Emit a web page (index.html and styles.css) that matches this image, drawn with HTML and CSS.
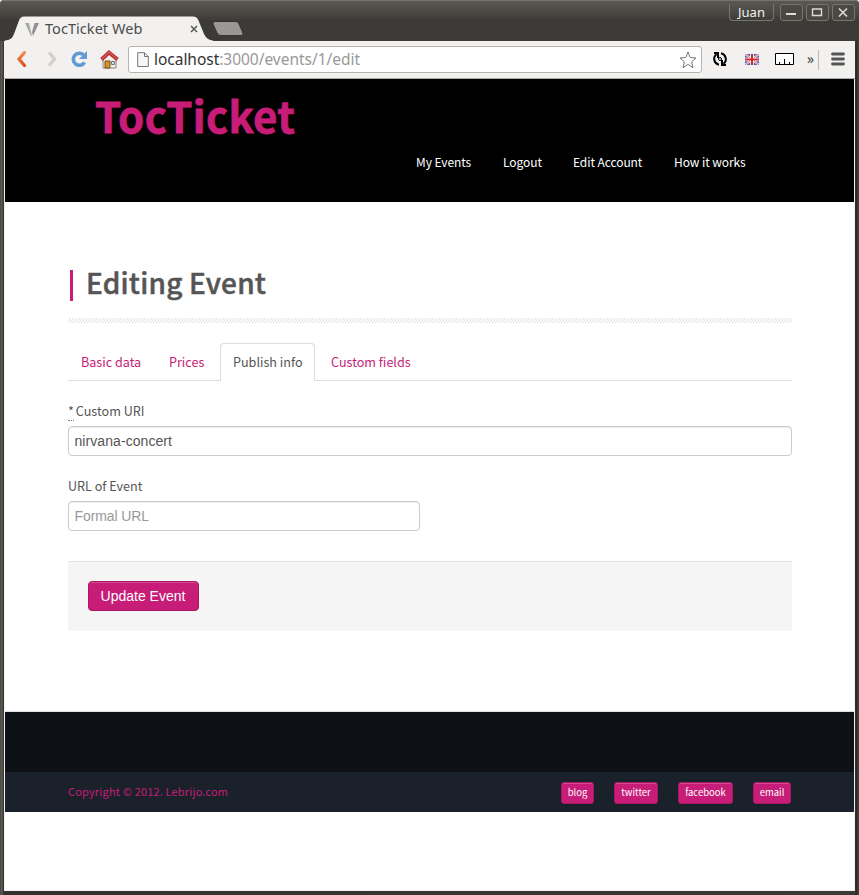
FILE: index.html
```html
<!DOCTYPE html>
<html lang="en">
<head>
<meta charset="utf-8">
<title>TocTicket Web</title>
<link rel="stylesheet" href="styles.css">
</head>
<body>
<div class="window">
  <div class="titlebar">
    <div class="tab-strip">
      <div class="browser-tab">
        <svg class="tab-shape" width="210" height="25" viewBox="0 0 210 25"><path d="M0 25V24.500Q7 24 9 18L14 4.500Q15.500 .5 19 .5H188Q192 .5 193.500 4.500L199 18Q202 24 208 24.500V25Z" fill="#f2f1f0"/></svg>
        <svg class="favicon" width="15" height="15" viewBox="0 0 15 15"><path d="M0 1H4L7 14H6Z" fill="#aaa"/><path d="M14 1L8 14L7 10L9.500 1Z" fill="#919191"/></svg>
        <span class="tab-title">TocTicket Web</span>
        <svg class="tab-close" width="8" height="8" viewBox="0 0 8 8"><path d="M1 1L7 7M7 1L1 7" stroke="#5a5a5a" stroke-width="1.600"/></svg>
      </div>
      <svg class="new-tab" width="32" height="16" viewBox="0 0 32 16"><path d="M3 .5H24Q26 .5 27 3L31 12Q31.500 14.500 29 14.500H9Q6 14.500 5 12L1 3Q.5 .5 3 .5Z" fill="#999894" stroke="#34332f"/></svg>
    </div>
    <div class="window-controls">
      <span class="user">Juan</span>
      <span class="control"><svg width="21" height="15" viewBox="0 0 21 15"><path d="M5 9H15" stroke="#dfdbd2" stroke-width="2"/></svg></span>
      <span class="control"><svg width="21" height="15" viewBox="0 0 21 15"><path d="M5.500 4H14.500V10.500H5.500Z" fill="none" stroke="#dfdbd2" stroke-width="1.400"/></svg></span>
      <span class="control"><svg width="21" height="15" viewBox="0 0 21 15"><path d="M6 3.500L14 11.500M14 3.500L6 11.500" stroke="#dfdbd2" stroke-width="1.600"/></svg></span>
    </div>
  </div>
  <div class="toolbar">
    <svg class="back" width="12" height="18" viewBox="0 0 12 18"><defs><linearGradient id="orange" x2="0" y2="1"><stop stop-color="#f58b55"/><stop offset="1" stop-color="#df4d14"/></linearGradient></defs><path d="M8.500 2.500L3 9L8.500 15.500" fill="none" stroke="url(#orange)" stroke-width="3.200" stroke-linecap="round"/></svg>
    <svg class="forward" width="12" height="18" viewBox="0 0 12 18"><path d="M2 2.500L7.500 9L2 15.500" fill="none" stroke="#d2d0ce" stroke-width="3.400"/></svg>
    <svg class="reload" width="17" height="18" viewBox="0 0 17 18"><path d="M13.500 12.300A6 6 0 1 1 12.500 5" fill="none" stroke="#629bd3" stroke-width="3.600"/><path d="M16 1V9H8Z" fill="#629bd3"/></svg>
    <svg class="home" width="19" height="19" viewBox="0 0 19 19"><path d="M3 9L9 3L16 9V18H3Z" fill="#f4efe5" stroke="#8b8578"/><path d="M5 11H10V18H5Z" fill="#d49426" stroke="#765119"/><path d="M11.500 11.500H14.500V14.500H11.500Z" fill="#d7e2e9" stroke="#777"/><path d="M1.500 9.500L9 2.500L17.500 9.500" fill="none" stroke="#ba3536" stroke-width="3.800"/><path d="M2 9L9.200 2L17 9" fill="none" stroke="#de6b68"/></svg>
    <div class="address">
      <svg width="12" height="16" viewBox="0 0 12 16"><path d="M.7.700H7.500L11.300 4.500V14.500H.7Z M7.500.700V4.500H11.300" fill="#f7f7f7" stroke="#777"/></svg>
      <span class="url"><b>localhost</b>:3000/events/1/edit</span>
      <svg class="star" width="18" height="18" viewBox="0 0 18 18"><path d="M9 1L11.200 6.500L17 7L12.600 10.800L14 16.700L9 13.500L4 16.700L5.400 10.800L1 7L6.800 6.500Z" fill="#fff" stroke="#777" stroke-linejoin="round"/></svg>
    </div>
    <svg class="sync" width="16" height="16" viewBox="0 0 16 16"><g fill="none" stroke="#000" stroke-width="2"><path d="M7 13.800A6 6 0 0 1 4.500 3.200M9 2.200A6 6 0 0 1 11.500 12.800"/><path d="M2 2H6V7M14 14H10V9"/></g><circle cx="8" cy="8" r="1.500" fill="none" stroke="#000"/></svg>
    <svg class="flag" width="14" height="11" viewBox="0 0 14 11"><path d="M0 0H14V11H0Z" fill="#3d60ab"/><path d="M0 0L14 11M14 0L0 11" stroke="#fff" stroke-width="2"/><path d="M0 0L14 11M14 0L0 11" stroke="#d33b43" stroke-width=".8"/><path d="M7 0V11M0 5.500H14" stroke="#fff" stroke-width="3.600"/><path d="M7 0V11M0 5.500H14" stroke="#d62833" stroke-width="2"/></svg>
    <svg class="ruler" width="19" height="12" viewBox="0 0 19 12"><path d="M.5.500H18.500V11.500H.5Z" fill="#fff" stroke="#000"/><path d="M4.500 9V11M9.500 6V11M14.500 9V11" stroke="#000"/></svg>
    <span class="more">»</span>
    <svg class="menu" width="14" height="14" viewBox="0 0 14 14"><path d="M1.500 2H12.500M1.500 7H12.500M1.500 12H12.500" stroke="#555" stroke-width="2.800" stroke-linecap="round"/></svg>
  </div>
  <div class="page">
    <header class="site-header">
      <div class="logo">TocTicket</div>
      <nav class="site-nav"><a class="n1">My Events</a><a class="n2">Logout</a><a class="n3">Edit Account</a><a class="n4">How it works</a></nav>
    </header>
    <main class="content">
      <h1><span>Editing Event</span></h1>
      <svg class="hatch" width="724" height="5"><defs><pattern id="lines" width="3" height="3" patternUnits="userSpaceOnUse"><path d="M2 0h1v1H2zM1 1h1v1H1zM0 2h1v1H0z" fill="#dedede" shape-rendering="crispEdges"/></pattern></defs><rect width="724" height="5" fill="url(#lines)"/></svg>
      <div class="tabs"><a class="t1">Basic data</a><a class="t2">Prices</a><a class="t3 active">Publish info</a><a class="t4">Custom fields</a></div>
      <form>
        <label for="uri"><span class="required">*</span> Custom URI</label>
        <input id="uri" value="nirvana-concert">
        <label for="url">URL of Event</label>
        <input id="url" class="short" placeholder="Formal URL">
        <div class="actions"><button type="button">Update Event</button></div>
      </form>
    </main>
    <div class="footer-space"></div>
    <footer>
      <span class="copyright">Copyright © 2012. Lebrijo.com</span>
      <div class="links"><a class="l1">blog</a><a class="l2">twitter</a><a class="l3">facebook</a><a class="l4">email</a></div>
    </footer>
  </div>
</div>
</body>
</html>
```
FILE: styles.css
```css
* { box-sizing: border-box; }
html { background: #fff; }
body { margin: 0; overflow: hidden; font-family: "Noto Sans CJK JP", "Noto Sans", sans-serif; font-size: 13px; color: #555; }
svg { display: block; flex: none; }
.window { width: 859px; height: 895px; padding: 0 4px 4px; background: linear-gradient(90deg, #32312d 0, #66645e 1px, #55534d 2px, #32312d 4px, #3b3a36 855px, #292825 856px, #45443f 859px); border-radius: 4px 4px 0 0; }
.titlebar { display: flex; justify-content: space-between; height: 41px; margin: 0 -4px; border-top: 1px solid #777570; border-radius: 4px 4px 0 0; background: linear-gradient(#595852, #3c3b37 20px); }
.tab-strip { display: flex; padding: 15px 0 0 8px; }
.browser-tab { display: flex; position: relative; width: 202px; height: 25px; padding: 6px 0 0 17px; }
.tab-shape { position: absolute; left: -3px; top: 0; }
.favicon, .tab-title, .tab-close { position: relative; }
.tab-title { width: 98px; margin-left: 5px; font: 14.5px/16px "Noto Sans", sans-serif; letter-spacing: .05px; margin-top: -2px; white-space: nowrap; color: #4c4c4c; }
.tab-close { margin: 3px 0 0 47px; }
.new-tab { margin: 5px 0 0 2px; }
.window-controls { display: flex; padding: 3px 4px 0 0; }
.user { width: 45px; height: 17px; margin-right: 3px; border: 1px solid #77756f; border-top: 0; border-radius: 0 0 4px 4px; font: 13px/17px "Noto Sans", sans-serif; text-align: center; color: #f2f1ec; }
.control { width: 23px; height: 17px; margin-left: 3px; border: 1px solid #77756f; border-radius: 3px; background: #494843; }
.toolbar { display: flex; align-items: center; height: 38px; border-bottom: 1px solid #aaa; background: #f2f1f0; padding-left: 12px; }
.toolbar > svg { margin-bottom: 1px; }
.toolbar .forward { margin-left: 19px; }
.reload { margin-left: 12px; }
.home { margin-left: 12px; }
.address { display: flex; align-items: center; width: 574px; height: 27px; margin-left: 9px; padding-left: 8px; border: 1px solid #b6b4b0; border-radius: 3px; background: #fff; }
.url { width: 206px; margin-left: 5px; font: 15.5px/20px "Noto Sans", sans-serif; letter-spacing: -.03px; color: #999; white-space: nowrap; position: relative; top: -1px; }
.url b { font-weight: 400; color: #333; }
.star { margin-left: 319px; }
.sync { margin-left: 10px; }
.flag { margin-left: 17px; }
.ruler { margin-left: 16px; }
.more { height: 20px; width: 12px; margin-left: 13px; border-right: 1px solid #bbb; font: 14px/18px "Noto Sans", sans-serif; color: #444; }
.menu { margin-left: 12px; }
.page { height: 812px; border: 1px solid #f2f1f0; border-top: 0; background: #fff; }
.site-header { height: 123px; padding: 12px 0 0 90px; background: #000; color: #fff; }
.logo { height: 53px; font-size: 42px; line-height: 48px; font-weight: 700; letter-spacing: .35px; color: #c71c77; -webkit-text-stroke: .8px #c71c77; }
.site-nav { display: flex; margin: 8px 0 0 321px; font-size: 12px; letter-spacing: -.08px; line-height: 20px; white-space: nowrap; }
.n1 { width: 87px; }
.n2 { width: 70px; }
.n3 { width: 101px; }
.content { width: 724px; margin-left: 63px; }
h1 { display: flex; height: 31px; margin: 68px 0 0 2px; padding-left: 13px; border-left: 3px solid #c71c77; font-size: 28px; line-height: 25px; font-weight: 500; letter-spacing: .22px; white-space: nowrap; -webkit-text-stroke: .5px #555; }
.hatch { margin-top: 17px; }
.tabs { display: flex; height: 38px; margin-top: 20px; border-bottom: 1px solid #ddd; font-size: 12.6px; }
.tabs a { height: 38px; padding: 1px 0 0 13px; color: #c71c77; line-height: 36px; white-space: nowrap; }
.t1 { width: 88px; }
.t2 { width: 64px; }
.tabs .active { width: 95px; padding: 0 0 0 12px; border: 1px solid #ddd; border-bottom: 0; border-radius: 4px 4px 0 0; background: #fff; color: #555; }
.tabs .t4 { padding-left: 16px; }
label { display: block; height: 20px; margin-top: 20px; font-size: 12.6px; line-height: 20px; white-space: nowrap; }
.required { display: inline-block; height: 20px; width: 6px; margin-right: -1px; border-bottom: 1px dotted #777; line-height: 20px; vertical-align: top; }
input { display: block; width: 724px; height: 30px; margin: 5px 0 0; padding: 4px 5.5px; border: 1px solid #ccc; border-radius: 4px; box-shadow: inset 0 1px 1px rgba(0,0,0,.075); background: #fff; font: 14px/20px "Liberation Sans", sans-serif; color: #555; }
#uri { letter-spacing: .07px; }
input::placeholder { color: #999; }
.short { width: 352px; letter-spacing: -.1px; }
.actions { height: 70px; margin-top: 30px; padding: 19px 20px; border-top: 1px solid #e5e5e5; background: #f5f5f5; }
button { display: block; width: 111px; height: 30px; padding: 0 1px 0 0; border: 1px solid #a81862; border-radius: 4px; box-shadow: inset 0 1px 0 rgba(255,255,255,.2); background: #c71c77; color: #fff; font: 14px/20px "Liberation Sans", sans-serif; }
.footer-space { height: 61px; margin-top: 80px; border-top: 1px solid #dddfe2; background: #0d1014; }
footer { display: flex; height: 40px; padding: 10px 0 0 63px; background: #1b212a; }
.copyright { width: 493px; font-size: 11px; letter-spacing: .17px; line-height: 18px; color: #c71c77; }
.links { display: flex; gap: 20px; }
.links a { height: 22px; border: 1px solid #a81862; border-radius: 3px; box-shadow: inset 0 1px 0 rgba(255,255,255,.2); background: #c71c77; color: #fff; font-size: 9.500px; line-height: 19px; text-align: center; }
.l1 { width: 33px; }
.l2 { width: 44px; }
.l3 { width: 55px; }
.l4 { width: 38px; }
```
